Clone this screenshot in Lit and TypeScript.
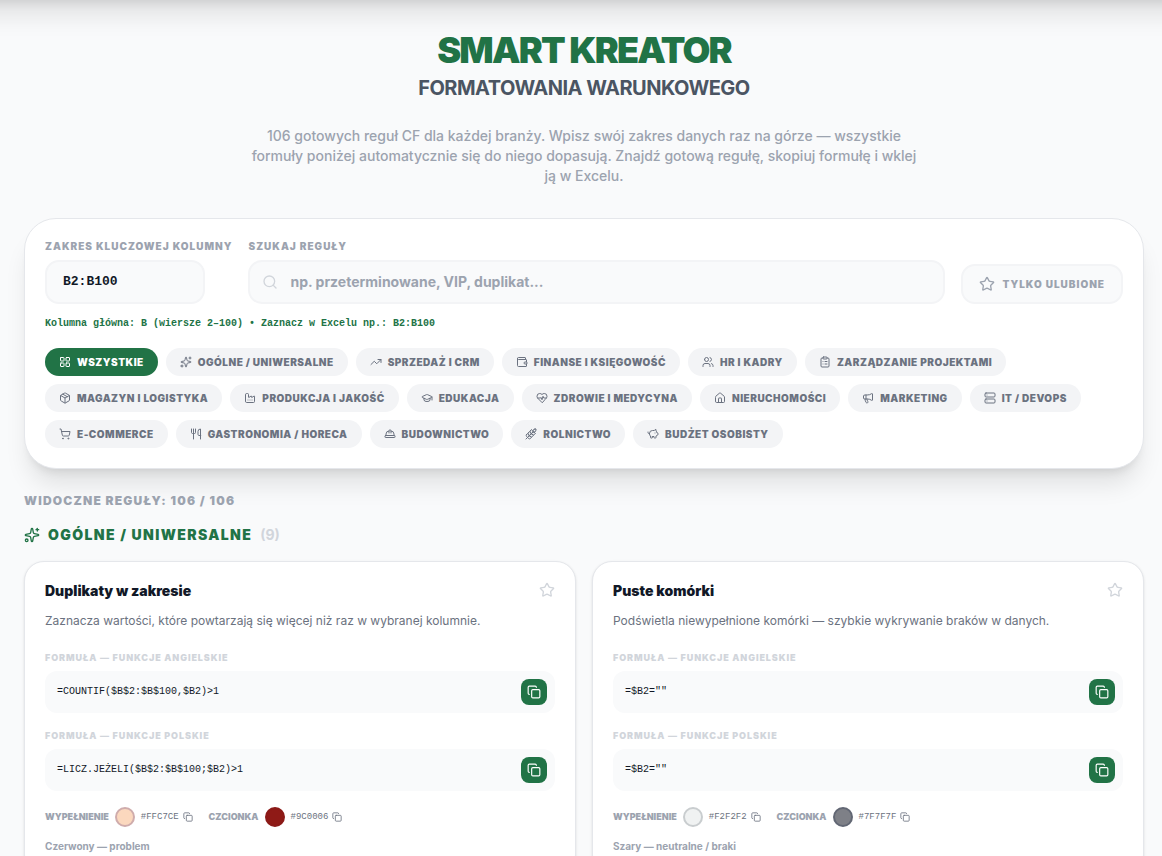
import { LitElement, html, svg, css } from "lit";
import { customElement, property, state } from "lit/decorators.js";
import { classMap } from "lit/directives/class-map.js";

const ICONS: Record<string, string[]> = {
  grid: ["M4 3h5a1 1 0 0 1 1 1v5a1 1 0 0 1-1 1H4a1 1 0 0 1-1-1V4a1 1 0 0 1 1-1z", "M15 3h5a1 1 0 0 1 1 1v5a1 1 0 0 1-1 1h-5a1 1 0 0 1-1-1V4a1 1 0 0 1 1-1z", "M15 14h5a1 1 0 0 1 1 1v5a1 1 0 0 1-1 1h-5a1 1 0 0 1-1-1v-5a1 1 0 0 1 1-1z", "M4 14h5a1 1 0 0 1 1 1v5a1 1 0 0 1-1 1H4a1 1 0 0 1-1-1v-5a1 1 0 0 1 1-1z"],
  sparkles: ["M11.017 2.814a1 1 0 0 1 1.966 0l1.051 5.558a2 2 0 0 0 1.594 1.594l5.558 1.051a1 1 0 0 1 0 1.966l-5.558 1.051a2 2 0 0 0-1.594 1.594l-1.051 5.558a1 1 0 0 1-1.966 0l-1.051-5.558a2 2 0 0 0-1.594-1.594l-5.558-1.051a1 1 0 0 1 0-1.966l5.558-1.051a2 2 0 0 0 1.594-1.594z", "M20 2v4", "M22 4h-4", "M2 20a2 2 0 1 0 4 0a2 2 0 1 0-4 0"],
  trend: ["M16 7h6v6", "m22 7-8.5 8.5-5-5L2 17"],
  wallet: ["M19 7V4a1 1 0 0 0-1-1H5a2 2 0 0 0 0 4h15a1 1 0 0 1 1 1v4h-3a2 2 0 0 0 0 4h3a1 1 0 0 0 1-1v-2a1 1 0 0 0-1-1", "M3 5v14a2 2 0 0 0 2 2h15a1 1 0 0 0 1-1v-4"],
  users: ["M16 21v-2a4 4 0 0 0-4-4H6a4 4 0 0 0-4 4v2", "M16 3.128a4 4 0 0 1 0 7.744", "M22 21v-2a4 4 0 0 0-3-3.87", "M5 7a4 4 0 1 0 8 0a4 4 0 1 0-8 0"],
  clipboard: ["M9 2h6a1 1 0 0 1 1 1v2a1 1 0 0 1-1 1H9a1 1 0 0 1-1-1V3a1 1 0 0 1 1-1z", "M16 4h2a2 2 0 0 1 2 2v14a2 2 0 0 1-2 2H6a2 2 0 0 1-2-2V6a2 2 0 0 1 2-2h2", "M12 11h4", "M12 16h4", "M8 11h.01", "M8 16h.01"],
  box: ["M11 21.73a2 2 0 0 0 2 0l7-4A2 2 0 0 0 21 16V8a2 2 0 0 0-1-1.73l-7-4a2 2 0 0 0-2 0l-7 4A2 2 0 0 0 3 8v8a2 2 0 0 0 1 1.73z", "M12 22V12", "M3.29 7 12 12l8.71-5", "m7.5 4.27 9 5.15"],
  factory: ["M12 16h.01", "M16 16h.01", "M8 16h.01", "M3 19a2 2 0 0 0 2 2h14a2 2 0 0 0 2-2V8.5a.5.5 0 0 0-.769-.422l-4.462 2.844A.5.5 0 0 1 15 10.5v-2a.5.5 0 0 0-.769-.422L9.77 10.922A.5.5 0 0 1 9 10.5V5a2 2 0 0 0-2-2H5a2 2 0 0 0-2 2z"],
  cap: ["M21.42 10.922a1 1 0 0 0-.019-1.838L12.83 5.18a2 2 0 0 0-1.66 0L2.6 9.08a1 1 0 0 0 0 1.832l8.57 3.908a2 2 0 0 0 1.66 0z", "M22 10v6", "M6 12.5V16a6 3 0 0 0 12 0v-3.5"],
  heart: ["M19 14c1.49-1.46 3-3.21 3-5.5A5.5 5.5 0 0 0 16.5 3c-1.76 0-3 .5-4.5 2-1.5-1.5-2.74-2-4.5-2A5.5 5.5 0 0 0 2 8.5c0 2.3 1.5 4.05 3 5.5l7 7Z", "M3.22 12H9.5l.5-1 2 4.5 2-7 1.5 3.5h5.27"],
  house: ["M15 21v-8a1 1 0 0 0-1-1h-4a1 1 0 0 0-1 1v8", "M3 10a2 2 0 0 1 .709-1.528l7-6a2 2 0 0 1 2.582 0l7 6A2 2 0 0 1 21 10v9a2 2 0 0 1-2 2H5a2 2 0 0 1-2-2z"],
  megaphone: ["M11 6a13 13 0 0 0 8.4-2.8A1 1 0 0 1 21 4v12a1 1 0 0 1-1.6.8A13 13 0 0 0 11 14H5a2 2 0 0 1-2-2V8a2 2 0 0 1 2-2z", "M6 14a12 12 0 0 0 2.4 7.2 2 2 0 0 0 3.2-2.4A8 8 0 0 1 10 14", "M8 6v8"],
  server: ["M4 2h16a2 2 0 0 1 2 2v4a2 2 0 0 1-2 2H4a2 2 0 0 1-2-2V4a2 2 0 0 1 2-2z", "M4 14h16a2 2 0 0 1 2 2v4a2 2 0 0 1-2 2H4a2 2 0 0 1-2-2v-4a2 2 0 0 1 2-2z", "M6 6h.01", "M6 18h.01"],
  cart: ["M7 21a1 1 0 1 0 2 0a1 1 0 1 0-2 0", "M18 21a1 1 0 1 0 2 0a1 1 0 1 0-2 0", "M2.05 2.05h2l2.66 12.42a2 2 0 0 0 2 1.58h9.78a2 2 0 0 0 1.95-1.57l1.65-7.43H5.12"],
  utensils: ["M3 2v7c0 1.1.9 2 2 2h4a2 2 0 0 0 2-2V2", "M7 2v20", "M21 15V2a5 5 0 0 0-5 5v6c0 1.1.9 2 2 2h3Zm0 0v7"],
  hat: ["M10 10V5a1 1 0 0 1 1-1h2a1 1 0 0 1 1 1v5", "M14 6a6 6 0 0 1 6 6v3", "M4 15v-3a6 6 0 0 1 6-6", "M3 15h18a1 1 0 0 1 1 1v2a1 1 0 0 1-1 1H3a1 1 0 0 1-1-1v-2a1 1 0 0 1 1-1z"],
  wheat: ["M2 22 16 8", "M3.47 12.53 5 11l1.53 1.53a3.5 3.5 0 0 1 0 4.94L5 19l-1.53-1.53a3.5 3.5 0 0 1 0-4.94Z", "M7.47 8.53 9 7l1.53 1.53a3.5 3.5 0 0 1 0 4.94L9 15l-1.53-1.53a3.5 3.5 0 0 1 0-4.94Z", "M11.47 4.53 13 3l1.53 1.53a3.5 3.5 0 0 1 0 4.94L13 11l-1.53-1.53a3.5 3.5 0 0 1 0-4.94Z", "M20 2h2v2a4 4 0 0 1-4 4h-2V6a4 4 0 0 1 4-4Z", "M11.47 17.47 13 19l-1.53 1.53a3.5 3.5 0 0 1-4.94 0L5 19l1.53-1.53a3.5 3.5 0 0 1 4.94 0Z", "M15.47 13.47 17 15l-1.53 1.53a3.5 3.5 0 0 1-4.94 0L9 15l1.53-1.53a3.5 3.5 0 0 1 4.94 0Z", "M19.47 9.47 21 11l-1.53 1.53a3.5 3.5 0 0 1-4.94 0L13 11l1.53-1.53a3.5 3.5 0 0 1 4.94 0Z"],
  piggy: ["M11 17h3v2a1 1 0 0 0 1 1h2a1 1 0 0 0 1-1v-3a3.16 3.16 0 0 0 2-2h1a1 1 0 0 0 1-1v-2a1 1 0 0 0-1-1h-1a5 5 0 0 0-2-4V3a4 4 0 0 0-3.2 1.6l-.3.4H11a6 6 0 0 0-6 6v1a5 5 0 0 0 2 4v3a1 1 0 0 0 1 1h2a1 1 0 0 0 1-1z", "M16 10h.01", "M2 8v1a2 2 0 0 0 2 2h1"],
  star: ["M11.525 2.295a.53.53 0 0 1 .95 0l2.31 4.679a2.123 2.123 0 0 0 1.595 1.16l5.166.756a.53.53 0 0 1 .294.904l-3.736 3.638a2.123 2.123 0 0 0-.611 1.878l.882 5.14a.53.53 0 0 1-.771.56l-4.618-2.428a2.122 2.122 0 0 0-1.973 0L6.396 21.01a.53.53 0 0 1-.77-.56l.881-5.139a2.122 2.122 0 0 0-.611-1.879L2.16 9.795a.53.53 0 0 1 .294-.906l5.165-.755a2.122 2.122 0 0 0 1.597-1.16z"],
  search: ["M3 11a8 8 0 1 0 16 0a8 8 0 1 0-16 0", "m21 21-4.34-4.34"],
  copy: ["M10 8h10a2 2 0 0 1 2 2v10a2 2 0 0 1-2 2H10a2 2 0 0 1-2-2V10a2 2 0 0 1 2-2z", "M4 16c-1.1 0-2-.9-2-2V4c0-1.1.9-2 2-2h10c1.1 0 2 .9 2 2"],
};

const icon = (name: string, size: number) => html`<svg
  width=${size} height=${size} viewBox="0 0 24 24" fill="none" stroke="currentColor"
  stroke-width="2" stroke-linecap="round" stroke-linejoin="round" aria-hidden="true"
>${ICONS[name].map((d) => svg`<path d=${d}></path>`)}</svg>`;

const CATEGORIES: [string, string][] = [
  ["grid", "WSZYSTKIE"],
  ["sparkles", "OGÓLNE / UNIWERSALNE"],
  ["trend", "SPRZEDAŻ I CRM"],
  ["wallet", "FINANSE I KSIĘGOWOŚĆ"],
  ["users", "HR I KADRY"],
  ["clipboard", "ZARZĄDZANIE PROJEKTAMI"],
  ["box", "MAGAZYN I LOGISTYKA"],
  ["factory", "PRODUKCJA I JAKOŚĆ"],
  ["cap", "EDUKACJA"],
  ["heart", "ZDROWIE I MEDYCYNA"],
  ["house", "NIERUCHOMOŚCI"],
  ["megaphone", "MARKETING"],
  ["server", "IT / DEVOPS"],
  ["cart", "E-COMMERCE"],
  ["utensils", "GASTRONOMIA / HORECA"],
  ["hat", "BUDOWNICTWO"],
  ["wheat", "ROLNICTWO"],
  ["piggy", "BUDŻET OSOBISTY"],
];

interface Swatch { label: string; hex: string; tone: string; }
interface Rule { title: string; text: string; en: string; pl: string; swatches: Swatch[]; note: string; }

const RULES: Rule[] = [
  {
    title: "Duplikaty w zakresie",
    text: "Zaznacza wartości, które powtarzają się więcej niż raz w wybranej kolumnie.",
    en: "=COUNTIF($B$2:$B$100,$B2)>1",
    pl: "=LICZ.JEŻELI($B$2:$B$100;$B2)>1",
    swatches: [
      { label: "WYPEŁNIENIE", hex: "#FFC7CE", tone: "peach" },
      { label: "CZCIONKA", hex: "#9C0006", tone: "maroon" },
    ],
    note: "Czerwony — problem",
  },
  {
    title: "Puste komórki",
    text: "Podświetla niewypełnione komórki — szybkie wykrywanie braków w danych.",
    en: '=$B2=""',
    pl: '=$B2=""',
    swatches: [
      { label: "WYPEŁNIENIE", hex: "#F2F2F2", tone: "light" },
      { label: "CZCIONKA", hex: "#7F7F7F", tone: "slate" },
    ],
    note: "Szary — neutralne / braki",
  },
];

const base = css`
  * { box-sizing: border-box; margin: 0; }
  svg { display: block; flex: none; }
  button, input { font-family: inherit; color: inherit; border: 0; padding: 0; background: none; }
  button { cursor: pointer; }
`;

@customElement("rule-card")
export class RuleCard extends LitElement {
  static styles = [base, css`
    :host { display: block; background: #fff; border: 1px solid #e5e7eb; border-radius: 20px; padding: 20px; box-shadow: 0 1px 3px rgba(0, 0, 0, 0.1), 0 1px 2px -1px rgba(0, 0, 0, 0.1); }
    .head { display: flex; justify-content: space-between; align-items: flex-start; margin-bottom: 11px; }
    .title { font-size: 14px; line-height: 18px; font-weight: 900; color: #111827; }
    .fav { color: #d1d5db; }
    .text { font-size: 12px; line-height: 20px; color: #6b7280; margin-bottom: 20px; }
    .label { font-size: 9px; line-height: 14px; font-weight: 900; letter-spacing: 0.1em; color: #d1d5db; margin-bottom: 6px; }
    .formula { display: flex; align-items: center; justify-content: space-between; gap: 8px; padding: 8px 8px 8px 12px; background: #f9fafb; border-radius: 12px; margin-bottom: 16px; }
    .code { font: 10px/16px "Liberation Mono", monospace; color: #111827; overflow-wrap: anywhere; }
    .copy { display: grid; place-items: center; width: 26px; height: 26px; border-radius: 8px; background: #217346; color: #fff; }
    .colors { display: flex; flex-wrap: wrap; gap: 16px; }
    .color { display: flex; align-items: center; gap: 6px; font-size: 9px; line-height: 14px; font-weight: 900; color: #9ca3af; }
    .dot { width: 20px; height: 20px; border-radius: 50%; border: 2px solid; }
    .peach { background: #fbd8be; border-color: #cfacac; }
    .maroon { background: #8f1a16; border-color: #8b1a18; }
    .light { background: #f0f2f2; border-color: #c9cdcf; }
    .slate { background: #7e8087; border-color: #626774; }
    .hex { display: flex; align-items: center; gap: 4px; font: 9px/14px "Liberation Mono", monospace; color: #6b7280; }
    .note { font-size: 10px; line-height: 15px; font-weight: 700; color: #9ca3af; margin-top: 12px; }
  `];

  @property({ attribute: false }) rule!: Rule;

  private formula(label: string, code: string) {
    return html`
      <p class="label">${label}</p>
      <div class="formula">
        <code class="code">${code}</code>
        <button class="copy" aria-label="Kopiuj">${icon("copy", 14)}</button>
      </div>`;
  }

  render() {
    const r = this.rule;
    return html`
      <div class="head">
        <h3 class="title">${r.title}</h3>
        <button class="fav" aria-label="Ulubione">${icon("star", 16)}</button>
      </div>
      <p class="text">${r.text}</p>
      ${this.formula("FORMUŁA — FUNKCJE ANGIELSKIE", r.en)}
      ${this.formula("FORMUŁA — FUNKCJE POLSKIE", r.pl)}
      <div class="colors">
        ${r.swatches.map((s) => html`
          <div class="color">
            <span>${s.label}</span>
            <span class="dot ${s.tone}"></span>
            <button class="hex">${s.hex}${icon("copy", 10)}</button>
          </div>`)}
      </div>
      <p class="note">${r.note}</p>`;
  }
}

@customElement("app-root")
export class AppRoot extends LitElement {
  static styles = [base, css`
    :host { display: block; min-height: 100vh; overflow: hidden; background: #f9fafb; font-family: Inter, "Liberation Sans", sans-serif; color: #111827; }
    .bar { position: relative; height: 64px; margin: -64px -48px 0; background: #fff; box-shadow: 0 20px 25px -5px rgba(0, 0, 0, 0.1), 0 8px 10px -6px rgba(0, 0, 0, 0.1); }
    .page { padding: 32px 18px 24px 24px; }
    .hero { display: flex; flex-direction: column; align-items: center; text-align: center; margin-bottom: 32px; }
    .name { display: flex; flex-direction: column; font-size: 36px; line-height: 36px; font-weight: 900; letter-spacing: -0.05em; color: #217346; }
    .sub { font-size: 20px; line-height: 28px; font-weight: 700; letter-spacing: -0.025em; color: #4b5563; margin-top: 6px; }
    .lead { max-width: 672px; margin-top: 24px; font-size: 14px; line-height: 20px; font-weight: 500; color: #9ca3af; }
    .panel { background: #fff; border: 1px solid #e5e7eb; border-radius: 32px; padding: 20px; box-shadow: 0 20px 25px -5px rgba(0, 0, 0, 0.1), 0 8px 10px -6px rgba(0, 0, 0, 0.1); }
    .controls { display: flex; align-items: flex-end; gap: 16px; }
    .label { display: block; font-size: 10px; line-height: 15px; font-weight: 900; letter-spacing: 0.1em; color: #9ca3af; margin-bottom: 6px; }
    .grow { flex: 1; min-width: 0; }
    .field { display: flex; align-items: center; gap: 12px; height: 44px; border: 2px solid #f3f4f6; border-radius: 14px; background: #f9fafb; padding: 0 16px; color: #d1d5db; }
    .narrow { width: 160px; }
    .search { padding: 0 12px; }
    .input { flex: 1; min-width: 0; width: 100%; outline: 0; font-size: 14px; font-weight: 700; line-height: 20px; color: #111827; }
    .input::placeholder { color: #9ca3af; opacity: 1; }
    .mono { font-family: "Liberation Mono", monospace; font-size: 13px; }
    .only { display: flex; align-items: center; gap: 8px; height: 40px; padding: 0 16px; border: 2px solid #f3f4f6; border-radius: 14px; background: #f9fafb; color: #9ca3af; font-size: 10px; font-weight: 900; letter-spacing: 0.1em; }
    .hint { margin: 12px 0 16px; font: 700 10px/16px "Liberation Mono", monospace; color: #217346; }
    .pills { display: flex; flex-wrap: wrap; gap: 8px; }
    .pill { display: flex; align-items: center; gap: 6px; height: 28px; padding: 0 14px; border-radius: 14px; background: #f3f4f6; color: #6b7280; font-size: 10px; line-height: 16px; font-weight: 900; letter-spacing: 0.05em; white-space: nowrap; }
    .active { background: #217346; color: #fff; }
    .count { margin-top: 24px; font-size: 12px; line-height: 16px; font-weight: 900; letter-spacing: 0.1em; color: #9ca3af; }
    .section { display: flex; align-items: center; gap: 8px; margin: 16px 0; font-size: 14px; line-height: 20px; font-weight: 900; letter-spacing: 0.1em; color: #217346; }
    .total { font-weight: 700; letter-spacing: 0; color: #d1d5db; }
    .cards { display: grid; grid-template-columns: repeat(2, minmax(0, 1fr)); gap: 16px; }
  `];

  @state() private active = 0;

  render() {
    return html`
      <div class="bar"></div>
      <main class="page">
        <header class="hero">
          <h1 class="name">SMART KREATOR</h1>
          <p class="sub">FORMATOWANIA WARUNKOWEGO</p>
          <p class="lead">106 gotowych reguł CF dla każdej branży. Wpisz swój zakres danych raz na górze — wszystkie formuły poniżej automatycznie się do niego dopasują. Znajdź gotową regułę, skopiuj formułę i wklej ją w Excelu.</p>
        </header>
        <section class="panel">
          <div class="controls">
            <div>
              <label class="label" for="range">ZAKRES KLUCZOWEJ KOLUMNY</label>
              <div class="field narrow"><input class="input mono" id="range" .value=${"B2:B100"} /></div>
            </div>
            <div class="grow">
              <label class="label" for="search">SZUKAJ REGUŁY</label>
              <div class="field search">${icon("search", 16)}<input class="input" id="search" type="text" placeholder="np. przeterminowane, VIP, duplikat..." /></div>
            </div>
            <button class="only">${icon("star", 16)}TYLKO ULUBIONE</button>
          </div>
          <p class="hint">Kolumna główna: B (wiersze 2–100) • Zaznacz w Excelu np.: B2:B100</p>
          <nav class="pills">
            ${CATEGORIES.map(([ic, name], i) => html`
              <button class=${classMap({ pill: true, active: i === this.active })} @click=${() => (this.active = i)}>${icon(ic, 12)}${name}</button>`)}
          </nav>
        </section>
        <p class="count">WIDOCZNE REGUŁY: 106 / 106</p>
        <h2 class="section">${icon("sparkles", 16)}OGÓLNE / UNIWERSALNE <span class="total">(9)</span></h2>
        <div class="cards">${RULES.map((r) => html`<rule-card .rule=${r}></rule-card>`)}</div>
      </main>`;
  }
}
